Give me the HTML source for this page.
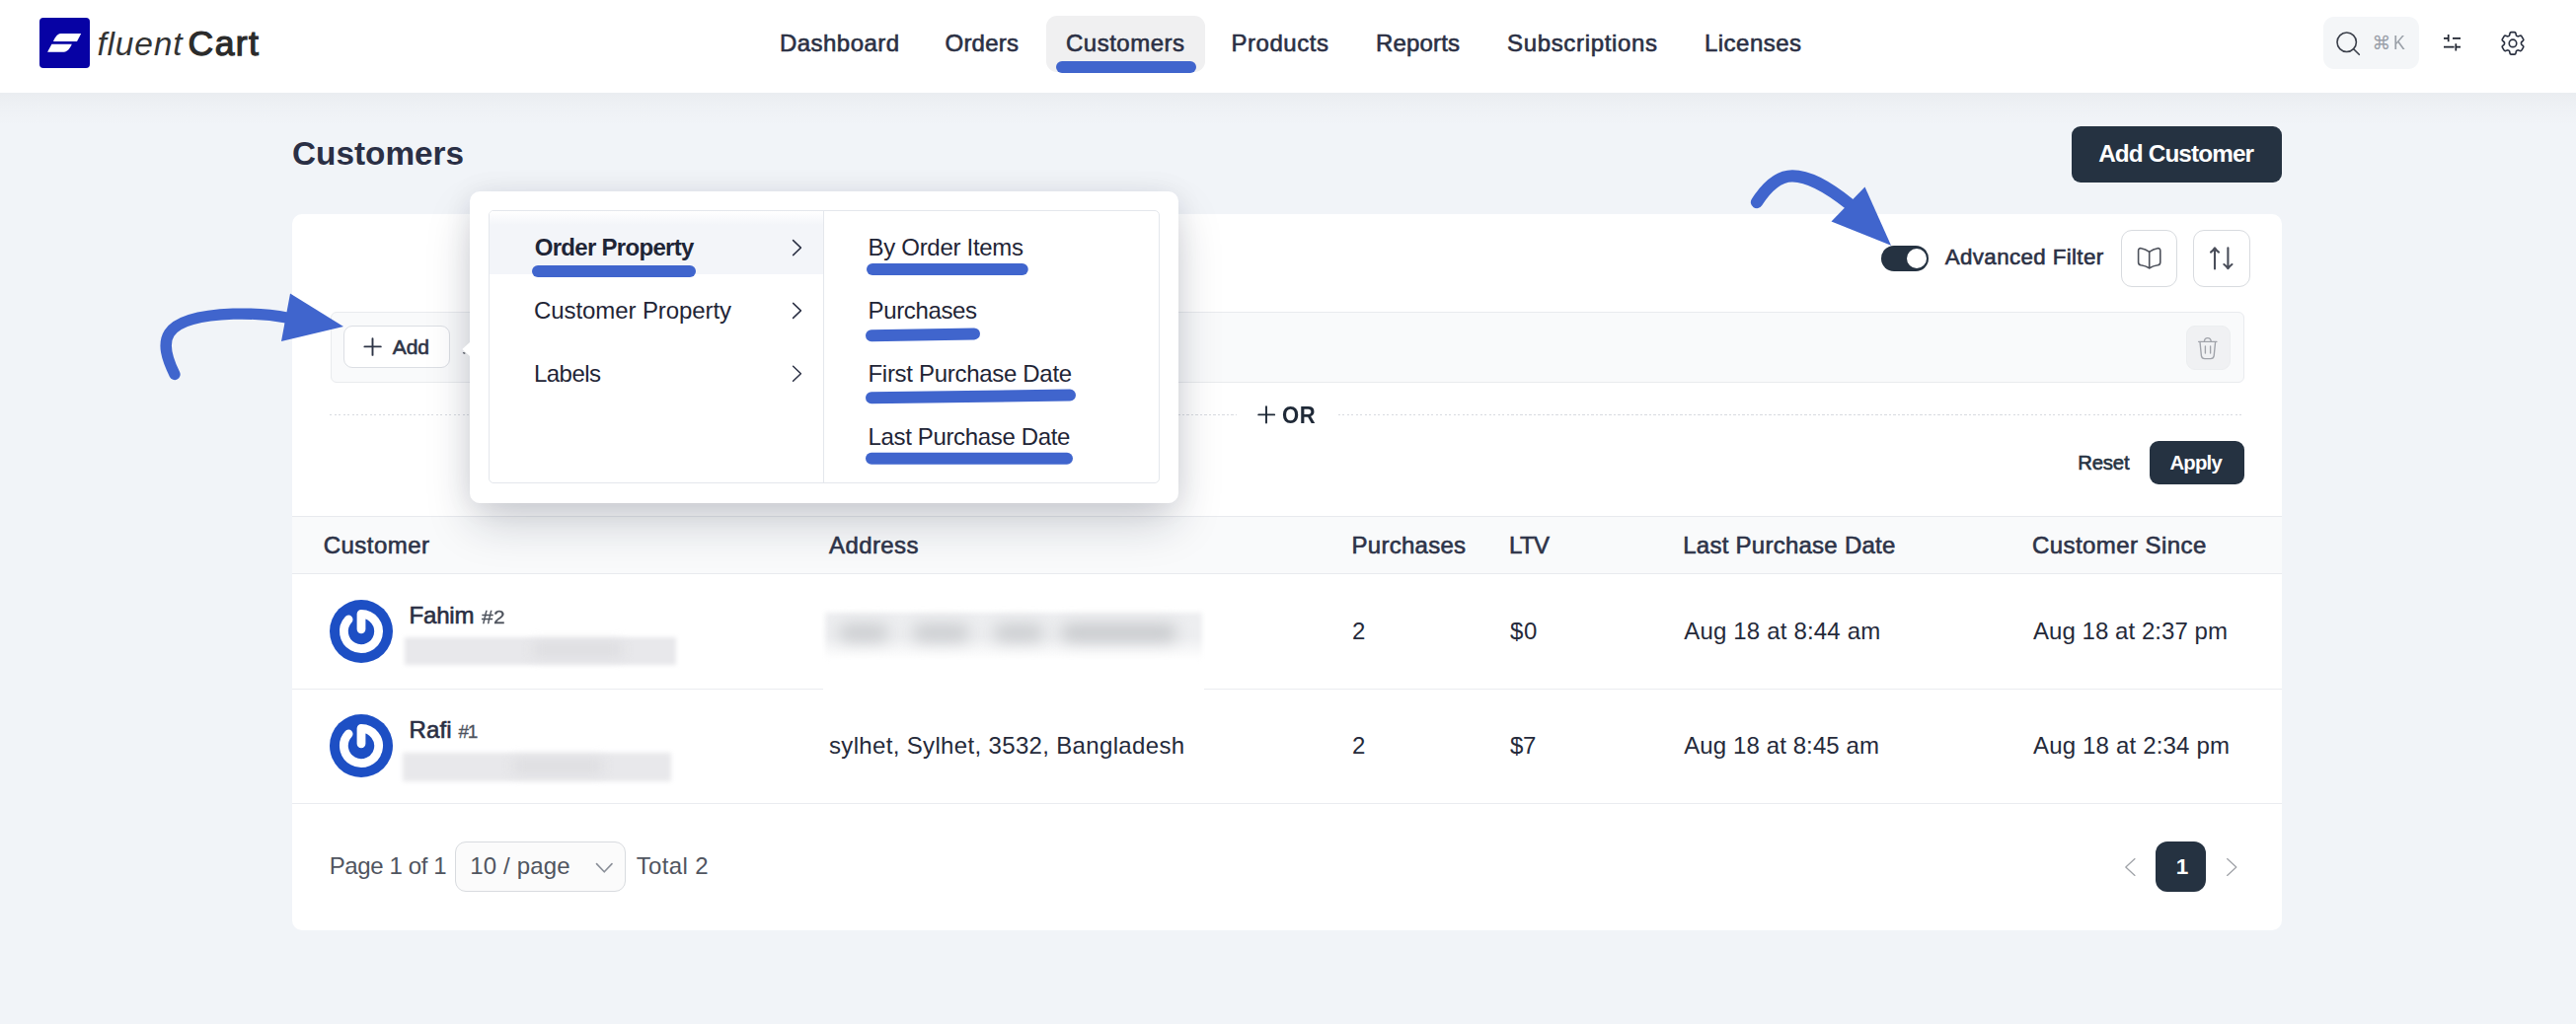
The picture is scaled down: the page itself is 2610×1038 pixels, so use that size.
<!DOCTYPE html>
<html lang="en">
<head>
<meta charset="utf-8">
<title>Customers - FluentCart</title>
<style>
html,body{margin:0;padding:0;}
body{width:2610px;height:1038px;background:#f1f4f8;position:relative;overflow:hidden;font-family:"Liberation Sans",sans-serif;}
.a{position:absolute;box-sizing:border-box;}
.t{position:absolute;white-space:pre;line-height:1;font-family:"Liberation Sans",sans-serif;}
svg{position:absolute;left:0;top:0;overflow:visible;}
</style>
</head>
<body>
<!-- header -->
<div class="a" style="left:0;top:94px;width:2610px;height:34px;background:linear-gradient(180deg,rgba(40,40,30,0.036) 0%,rgba(40,40,30,0.014) 38%,rgba(40,40,30,0) 100%);"></div>
<div class="a" style="left:0;top:0;width:2610px;height:94px;background:#fff;"></div>
<div class="a" style="left:40px;top:18px;width:51px;height:51px;border-radius:4px;background:#0702a4;"></div>
<div class="a" style="left:1060px;top:16px;width:161px;height:57px;border-radius:11px;background:#f0f0f1;"></div>
<div class="a" style="left:2354px;top:17px;width:96.5px;height:52.5px;border-radius:11px;background:#f4f6f8;"></div>

<!-- card -->
<div class="a" style="left:296px;top:217px;width:2016px;height:725.5px;border-radius:10px;background:#fff;"></div>
<!-- add customer -->
<div class="a" style="left:2099px;top:128px;width:213px;height:57px;border-radius:9px;background:#253241;"></div>
<!-- toggle -->
<div class="a" style="left:1905.5px;top:248.75px;width:48.5px;height:26.25px;border-radius:14px;background:#253241;"></div>
<div class="a" style="left:1932px;top:251.75px;width:20px;height:20px;border-radius:10px;background:#fff;"></div>
<!-- icon buttons -->
<div class="a" style="left:2149px;top:233px;width:56.5px;height:57.8px;border-radius:11px;border:1px solid #d8dbdf;background:#fff;"></div>
<div class="a" style="left:2222.2px;top:233px;width:57.5px;height:57.8px;border-radius:11px;border:1px solid #d8dbdf;background:#fff;"></div>
<!-- filter group -->
<div class="a" style="left:334.5px;top:316px;width:1939px;height:71.5px;border-radius:6px;border:1px solid #e9ebee;background:#f9fafb;"></div>
<div class="a" style="left:348px;top:330px;width:107.5px;height:43.3px;border-radius:9px;border:1px solid #dcdfe4;background:#fff;"></div>
<div class="a" style="left:2215.2px;top:330px;width:44.7px;height:44.8px;border-radius:9px;border:1px solid #eceef0;background:#f0f1f3;"></div>
<!-- dotted OR line -->
<div class="a" style="left:334px;top:420.25px;width:919px;height:1px;background:repeating-linear-gradient(90deg,#d8dbe0 0 2px,transparent 2px 4.5px);"></div>
<div class="a" style="left:1355.5px;top:420.25px;width:918px;height:1px;background:repeating-linear-gradient(90deg,#d8dbe0 0 2px,transparent 2px 4.5px);"></div>
<!-- apply -->
<div class="a" style="left:2178px;top:447px;width:95.75px;height:43.75px;border-radius:9px;background:#253241;"></div>
<!-- table header -->
<div class="a" style="left:296px;top:523px;width:2016px;height:58.75px;background:#f9fafb;border-top:1px solid #e8eaee;border-bottom:1px solid #e8eaee;"></div>
<div class="a" style="left:296px;top:697.75px;width:2016px;height:1px;background:#eaecf0;"></div>
<div class="a" style="left:296px;top:813.75px;width:2016px;height:1px;background:#eaecf0;"></div>
<!-- blurred email -->
<div class="a" style="left:410px;top:645.5px;width:275px;height:28.5px;background:#e8e8eb;filter:blur(2px);"></div>
<div class="a" style="left:540px;top:651px;width:90px;height:15px;background:#dedee1;filter:blur(6px);"></div>
<div class="a" style="left:407.5px;top:762.5px;width:272px;height:29px;background:#e8e8eb;filter:blur(2.5px);"></div>
<div class="a" style="left:520px;top:769px;width:90px;height:15px;background:#dedee1;filter:blur(6px);"></div>
<!-- blurred address -->
<div class="a" style="left:833.75px;top:618.75px;width:386.25px;height:81.25px;background:#fff;"></div>
<div class="a" style="left:836px;top:621px;width:382px;height:47px;background:linear-gradient(180deg,#edeef0 0,#edeef0 55%,#fff 100%);filter:blur(2.5px);"></div>
<div class="a" style="left:850px;top:633px;width:50px;height:17px;border-radius:8px;background:#c9cbce;filter:blur(8px);"></div>
<div class="a" style="left:925px;top:633px;width:57px;height:17px;border-radius:8px;background:#c9cbce;filter:blur(8px);"></div>
<div class="a" style="left:1007px;top:633px;width:50px;height:17px;border-radius:8px;background:#c9cbce;filter:blur(8px);"></div>
<div class="a" style="left:1075px;top:633px;width:117px;height:17px;border-radius:8px;background:#c5c7ca;filter:blur(8px);"></div>
<!-- footer -->
<div class="a" style="left:461px;top:853.25px;width:172.5px;height:50.5px;border-radius:11px;border:1px solid #d8dbdf;background:#fbfbfb;"></div>
<div class="a" style="left:2184px;top:853px;width:51.25px;height:51.25px;border-radius:12px;background:#253241;"></div>

<!-- popup -->
<div class="a" style="left:476px;top:194px;width:718px;height:316px;border-radius:10px;background:#fff;box-shadow:0 22px 48px -4px rgba(20,30,50,0.21),0 2px 28px rgba(20,30,50,0.08);"></div>
<div class="a" style="left:495px;top:213px;width:680px;height:276.5px;border-radius:5px;border:1px solid #e4e7ec;background:#fff;"></div>
<div class="a" style="left:496px;top:214px;width:338px;height:63.5px;background:linear-gradient(180deg,#fff 0,#f3f5f9 14px);border-radius:4px 0 0 0;"></div>
<div class="a" style="left:833.5px;top:214px;width:1px;height:274.5px;background:#e4e7ec;"></div>

<svg width="2610" height="1038" viewBox="0 0 2610 1038" fill="none">
<!-- logo mark -->
<path d="M61.5 34 H82.2 L78 41.9 H54 C55.5 38.5 57.5 34.6 61.5 34 Z" fill="#fff"/>
<path d="M52.4 44.7 H72.8 C71 48.5 69 52.2 64.6 52.8 H48.1 Z" fill="#fff"/>
<!-- search -->
<circle cx="2377.7" cy="42.75" r="9.7" stroke="#3a3f4a" stroke-width="1.6"/>
<path d="M2384.7 49.8 L2390.3 55.3" stroke="#3a3f4a" stroke-width="1.6" stroke-linecap="round"/>
<!-- sliders -->
<g stroke="#1f2430" stroke-width="1.7" stroke-linecap="butt">
<path d="M2476 38.9 H2480.7 M2480.7 35 V42.3 M2485 38.9 H2493"/>
<path d="M2476 47.7 H2486.6 M2488.3 44.3 V51.6 M2488.3 47.7 H2493"/>
</g>
<!-- gear (heroicons cog-6-tooth) -->
<g transform="translate(2531 28.9) scale(1.25)" stroke="#2a3040" stroke-width="1.3" stroke-linecap="round" stroke-linejoin="round">
<path d="M9.594 3.94c.09-.542.56-.94 1.11-.94h2.593c.55 0 1.02.398 1.11.94l.213 1.281c.063.374.313.686.645.87.074.04.147.083.22.127.324.196.72.257 1.075.124l1.217-.456a1.125 1.125 0 011.37.49l1.296 2.247a1.125 1.125 0 01-.26 1.431l-1.003.827c-.293.24-.438.613-.431.992a6.759 6.759 0 010 .255c-.007.378.138.75.43.99l1.005.828c.424.35.534.954.26 1.43l-1.298 2.247a1.125 1.125 0 01-1.369.491l-1.217-.456c-.355-.133-.75-.072-1.076.124a6.57 6.57 0 01-.22.128c-.331.183-.581.495-.644.869l-.213 1.28c-.09.543-.56.941-1.11.941h-2.594c-.55 0-1.02-.398-1.11-.94l-.213-1.281c-.062-.374-.312-.686-.644-.87a6.52 6.52 0 01-.22-.127c-.325-.196-.72-.257-1.076-.124l-1.217.456a1.125 1.125 0 01-1.369-.49l-1.297-2.247a1.125 1.125 0 01.26-1.431l1.004-.827c.292-.24.437-.613.43-.992a6.932 6.932 0 010-.255c.007-.378-.138-.75-.43-.99l-1.004-.828a1.125 1.125 0 01-.26-1.43l1.297-2.247a1.125 1.125 0 011.37-.491l1.216.456c.356.133.751.072 1.076-.124.072-.044.146-.087.22-.128.332-.183.582-.495.644-.869l.214-1.281z"/>
<path d="M15 12a3 3 0 11-6 0 3 3 0 016 0z"/>
</g>
<!-- book icon -->
<g stroke="#4d515b" stroke-width="1.6" stroke-linejoin="round" stroke-linecap="round">
<path d="M2177.7 255.3 C2175.2 253.4 2172.2 252.1 2169.4 251.7 C2167.7 251.5 2166.6 252.4 2166.6 254 V266 C2166.6 267.6 2167.5 268.5 2169.1 268.8 C2172.3 269.3 2175.2 270.3 2177.7 271.8 C2180.2 270.3 2183.1 269.3 2186.3 268.8 C2187.9 268.5 2188.8 267.6 2188.8 266 V254 C2188.8 252.4 2187.7 251.5 2186 251.7 C2183.2 252.1 2180.2 253.4 2177.7 255.3 Z"/>
<path d="M2177.7 255.3 V271.8"/>
</g>
<!-- sort icon -->
<g stroke="#4a4e5a" stroke-width="2.1" stroke-linecap="round" stroke-linejoin="round">
<path d="M2244 272.4 V251.6 M2240 255.6 C2241.6 254.4 2243 253 2244 251.4 C2245 253 2246.4 254.4 2248 255.6"/>
<path d="M2257.4 251.2 V272.2 M2253.4 268 C2255 269.2 2256.4 270.6 2257.4 272.2 C2258.4 270.6 2259.8 269.2 2261.4 268"/>
</g>
<!-- trash -->
<g stroke="#a0a3aa" stroke-width="1.35" stroke-linecap="round" stroke-linejoin="round">
<path d="M2227.6 346.3 H2246"/>
<path d="M2233.4 346 C2233.6 343.6 2235 342.6 2236.8 342.6 C2238.6 342.6 2240 343.6 2240.2 346"/>
<path d="M2229 346.6 L2230.4 360.6 C2230.7 362.6 2231.8 363.6 2233.8 363.6 H2239.8 C2241.8 363.6 2242.9 362.6 2243.2 360.6 L2244.6 346.6"/>
<path d="M2234.4 351 V358 M2239.6 351 V358"/>
</g>
<!-- plus (Add) -->
<path d="M369.4 351.4 H385.8 M377.5 343.3 V359.9" stroke="#2d3446" stroke-width="1.9" stroke-linecap="round"/>
<!-- plus (OR) -->
<path d="M1275.2 420.4 H1291.2 M1283 412.3 V428.5" stroke="#1f2937" stroke-width="1.9" stroke-linecap="round"/>
<!-- popup arrow -->
<path d="M476.5 346.5 L468.3 354 L476.5 361.5 Z" fill="#fff"/>
<path d="M469.4 357.7 L470.9 358.1" stroke="#3a3f4a" stroke-width="1.1" stroke-linecap="round"/>
<!-- popup chevrons -->
<g stroke="#2b3044" stroke-width="1.5" stroke-linecap="round" stroke-linejoin="round">
<path d="M803.6 243.6 L811.4 251.1 L803.6 258.6"/>
<path d="M803.6 307.4 L811.4 314.9 L803.6 322.4"/>
<path d="M803.6 371.2 L811.4 378.7 L803.6 386.2"/>
</g>
<!-- select chevron -->
<path d="M604.5 875.6 L612.25 883.8 L620 875.6" stroke="#8a8f98" stroke-width="1.6" stroke-linecap="round" stroke-linejoin="round"/>
<!-- pagination chevrons -->
<g stroke="#a0a3a8" stroke-width="1.3" stroke-linecap="round" stroke-linejoin="round">
<path d="M2163 870.6 L2153.8 879 L2163 887.4"/>
<path d="M2256.6 870.6 L2265.8 879 L2256.6 887.4"/>
</g>
<!-- avatars -->
<g id="av1">
<circle cx="366" cy="640" r="32" fill="#1d4fc4"/>
<path d="M366 637.8 V622.4 A17.6 17.6 0 1 1 353.13 627.99" stroke="#fff" stroke-width="8.8" stroke-linecap="round" stroke-linejoin="round"/>
</g>
<g>
<circle cx="366" cy="756" r="32" fill="#1d4fc4"/>
<path d="M366 753.8 V738.4 A17.6 17.6 0 1 1 353.13 743.99" stroke="#fff" stroke-width="8.8" stroke-linecap="round" stroke-linejoin="round"/>
</g>
<!-- blue annotation underlines -->
<g stroke="#4065cd" stroke-width="12" stroke-linecap="round">
<path d="M1076 68 H1206"/>
<path d="M545 275 H699"/>
<path d="M884 273 H1035.75"/>
<path d="M883 340.2 L987 338.4"/>
<path d="M883 403.2 L1084 400.6"/>
<path d="M883 464.8 H1081"/>
</g>
<!-- annotation arrows -->
<path d="M177 379.5 C161 347 159 321 236 318.2 C256 317.6 276 319.2 292 322.2" stroke="#4065cd" stroke-width="11.3" stroke-linecap="round" fill="none"/>
<path d="M1780 205 C1789 191 1801 178.4 1816 178.4 C1832 178.4 1850 188 1874 207" stroke="#4065cd" stroke-width="12.3" stroke-linecap="round" fill="none"/>
<path d="M294 297.5 L285 346 L348 331 Z" fill="#4065cd"/>
<path d="M1889.5 189.5 L1855.5 224.5 L1916 248.75 Z" fill="#4065cd"/>

</svg>
<span class="t" style="left:98.40px;top:28.00px;font-size:33.5px;color:#333333;letter-spacing:0.851px;font-style:italic;">fluent</span>
<span class="t" style="left:190.60px;top:27.00px;font-size:35.5px;color:#2b2b2b;letter-spacing:1.399px;-webkit-text-stroke:1.25px #2b2b2b;">Cart</span>
<span class="t" style="left:790.00px;top:32.00px;font-size:24px;color:#2b3044;letter-spacing:0.461px;-webkit-text-stroke:0.6px currentColor;">Dashboard</span>
<span class="t" style="left:957.50px;top:32.00px;font-size:24px;color:#2b3044;letter-spacing:0.230px;-webkit-text-stroke:0.6px currentColor;">Orders</span>
<span class="t" style="left:1080.00px;top:32.00px;font-size:24px;color:#2b3044;letter-spacing:0.497px;-webkit-text-stroke:0.6px currentColor;">Customers</span>
<span class="t" style="left:1247.50px;top:32.00px;font-size:24px;color:#2b3044;letter-spacing:0.541px;-webkit-text-stroke:0.6px currentColor;">Products</span>
<span class="t" style="left:1394.00px;top:32.00px;font-size:24px;color:#2b3044;letter-spacing:0.161px;-webkit-text-stroke:0.6px currentColor;">Reports</span>
<span class="t" style="left:1527.00px;top:32.00px;font-size:24px;color:#2b3044;letter-spacing:0.661px;-webkit-text-stroke:0.6px currentColor;">Subscriptions</span>
<span class="t" style="left:1727.00px;top:32.00px;font-size:24px;color:#2b3044;letter-spacing:0.468px;-webkit-text-stroke:0.6px currentColor;">Licenses</span>
<span class="t" style="left:2425.00px;top:33.00px;font-size:20.3px;color:#9aa0a8;letter-spacing:0.000px;transform:scaleX(0.87);transform-origin:0 0;">K</span>
<span class="t" style="left:296.00px;top:139.00px;font-size:33.3px;color:#2a2f45;letter-spacing:0.023px;font-weight:700;">Customers</span>
<span class="t" style="left:2126.20px;top:144.00px;font-size:24.3px;color:#ffffff;letter-spacing:-0.866px;font-weight:700;">Add Customer</span>
<span class="t" style="left:1970.75px;top:250.00px;font-size:22.3px;color:#2b3044;letter-spacing:0.394px;-webkit-text-stroke:0.6px currentColor;">Advanced Filter</span>
<span class="t" style="left:397.70px;top:341.00px;font-size:21px;color:#2d3446;letter-spacing:-0.043px;-webkit-text-stroke:0.6px currentColor;">Add</span>
<span class="t" style="left:1299.10px;top:409.00px;font-size:24.5px;color:#1f2937;letter-spacing:0.721px;font-weight:700;transform:scaleX(0.9);transform-origin:0 0;">OR</span>
<span class="t" style="left:2105.30px;top:459.00px;font-size:20.3px;color:#253241;letter-spacing:-0.187px;-webkit-text-stroke:0.6px currentColor;">Reset</span>
<span class="t" style="left:2198.50px;top:459.00px;font-size:20.3px;color:#ffffff;letter-spacing:-0.790px;font-weight:700;">Apply</span>
<span class="t" style="left:541.75px;top:239.00px;font-size:24px;color:#1f2536;letter-spacing:-0.702px;font-weight:700;">Order Property</span>
<span class="t" style="left:541.00px;top:303.00px;font-size:24px;color:#1f2536;letter-spacing:-0.087px;">Customer Property</span>
<span class="t" style="left:541.00px;top:367.00px;font-size:24px;color:#1f2536;letter-spacing:-0.545px;">Labels</span>
<span class="t" style="left:879.50px;top:239.00px;font-size:24px;color:#1f2536;letter-spacing:-0.297px;">By Order Items</span>
<span class="t" style="left:879.50px;top:303.00px;font-size:24px;color:#1f2536;letter-spacing:-0.361px;">Purchases</span>
<span class="t" style="left:879.50px;top:367.00px;font-size:24px;color:#1f2536;letter-spacing:-0.304px;">First Purchase Date</span>
<span class="t" style="left:879.50px;top:431.00px;font-size:24px;color:#1f2536;letter-spacing:-0.349px;">Last Purchase Date</span>
<span class="t" style="left:327.75px;top:541.00px;font-size:24px;color:#2d3348;letter-spacing:0.459px;-webkit-text-stroke:0.6px currentColor;">Customer</span>
<span class="t" style="left:840.00px;top:541.00px;font-size:24px;color:#2d3348;letter-spacing:0.410px;-webkit-text-stroke:0.6px currentColor;">Address</span>
<span class="t" style="left:1369.50px;top:541.00px;font-size:24px;color:#2d3348;letter-spacing:0.264px;-webkit-text-stroke:0.6px currentColor;">Purchases</span>
<span class="t" style="left:1529.00px;top:541.00px;font-size:24px;color:#2d3348;letter-spacing:-0.613px;-webkit-text-stroke:0.6px currentColor;">LTV</span>
<span class="t" style="left:1705.25px;top:541.00px;font-size:24px;color:#2d3348;letter-spacing:0.254px;-webkit-text-stroke:0.6px currentColor;">Last Purchase Date</span>
<span class="t" style="left:2059.00px;top:541.00px;font-size:24px;color:#2d3348;letter-spacing:0.432px;-webkit-text-stroke:0.6px currentColor;">Customer Since</span>
<span class="t" style="left:1370.00px;top:628.00px;font-size:24px;color:#252a3a;letter-spacing:0.000px;">2</span>
<span class="t" style="left:1530.00px;top:628.00px;font-size:24px;color:#252a3a;letter-spacing:0.652px;">$0</span>
<span class="t" style="left:1706.25px;top:628.00px;font-size:24px;color:#252a3a;letter-spacing:0.178px;">Aug 18 at 8:44 am</span>
<span class="t" style="left:2060.00px;top:628.00px;font-size:24px;color:#252a3a;letter-spacing:0.053px;">Aug 18 at 2:37 pm</span>
<span class="t" style="left:840.00px;top:744.00px;font-size:24px;color:#252a3a;letter-spacing:0.340px;">sylhet, Sylhet, 3532, Bangladesh</span>
<span class="t" style="left:1370.00px;top:744.00px;font-size:24px;color:#252a3a;letter-spacing:0.000px;">2</span>
<span class="t" style="left:1530.00px;top:744.00px;font-size:24px;color:#252a3a;letter-spacing:-0.348px;">$7</span>
<span class="t" style="left:1706.25px;top:744.00px;font-size:24px;color:#252a3a;letter-spacing:0.100px;">Aug 18 at 8:45 am</span>
<span class="t" style="left:2060.00px;top:744.00px;font-size:24px;color:#252a3a;letter-spacing:0.178px;">Aug 18 at 2:34 pm</span>
<span class="t" style="left:414.50px;top:612.00px;font-size:24px;color:#2a2f43;letter-spacing:-0.172px;-webkit-text-stroke:0.6px currentColor;">Fahim</span>
<span class="t" style="left:487.70px;top:616.00px;font-size:19px;color:#4d525c;letter-spacing:0.433px;-webkit-text-stroke:0.3px currentColor;transform:scaleX(1.1);transform-origin:0 0;">#2</span>
<span class="t" style="left:414.50px;top:728.00px;font-size:24px;color:#2a2f43;letter-spacing:0.151px;-webkit-text-stroke:0.6px currentColor;">Rafi</span>
<span class="t" style="left:464.40px;top:732.00px;font-size:19px;color:#4d525c;letter-spacing:-1.167px;-webkit-text-stroke:0.3px currentColor;">#1</span>
<span class="t" style="left:333.75px;top:866.00px;font-size:24px;color:#50555f;letter-spacing:-0.392px;">Page 1 of 1</span>
<span class="t" style="left:476.25px;top:866.00px;font-size:24px;color:#50555f;letter-spacing:0.157px;">10 / page</span>
<span class="t" style="left:644.75px;top:866.00px;font-size:24px;color:#50555f;letter-spacing:0.356px;">Total 2</span>
<span class="t" style="left:2204.80px;top:868.00px;font-size:22.5px;color:#ffffff;letter-spacing:0.000px;font-weight:700;">1</span>
<span class="t" style="left:2403.6px;top:35px;font-size:18.8px;color:#9aa0a8;font-family:'Liberation Sans','DejaVu Sans',sans-serif;">⌘</span>
</body>
</html>
